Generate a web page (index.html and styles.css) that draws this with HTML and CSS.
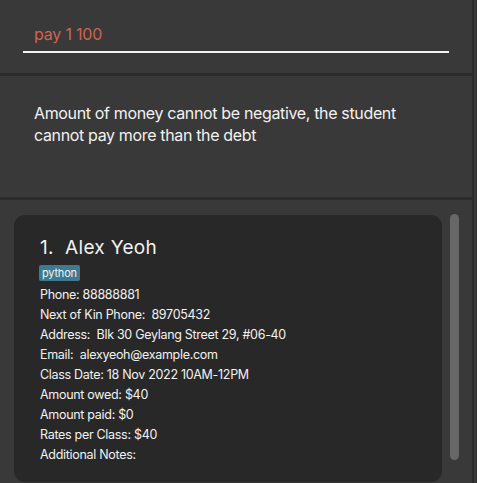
FILE: index.html
```html
<!DOCTYPE html>
<html>
<head>
<meta charset="utf-8">
<link rel="stylesheet" href="styles.css">
</head>
<body>
<div class="app">
  <div class="main">
    <div class="command">
      <div class="input">pay 1 100</div>
    </div>
    <div class="result">
      <p>Amount of money cannot be negative, the student cannot pay more than the debt</p>
    </div>
    <div class="list">
      <div class="card">
        <div class="name">1.&nbsp; Alex Yeoh</div>
        <div class="tags"><span class="tag">python</span></div>
        <div class="field">Phone: 88888881</div>
        <div class="field">Next of Kin Phone:&nbsp; 89705432</div>
        <div class="field">Address:&nbsp; Blk 30 Geylang Street 29, #06-40</div>
        <div class="field">Email:&nbsp; alexyeoh@example.com</div>
        <div class="field">Class Date: 18 Nov 2022 10AM-12PM</div>
        <div class="field">Amount owed: $40</div>
        <div class="field">Amount paid: $0</div>
        <div class="field">Rates per Class: $40</div>
        <div class="field">Additional Notes:</div>
      </div>
      <div class="scrollbar"></div>
    </div>
  </div>
</div>
</body>
</html>
```
FILE: styles.css
```css
html, body {
  margin: 0;
  padding: 0;
}
body {
  width: 477px;
  height: 483px;
  overflow: hidden;
  background: #393939;
  font-family: Inter, "Noto Sans", sans-serif;
  color: #f2f2f2;
}
.app {
  display: flex;
  height: 483px;
}
.main {
  width: 472px;
  border-right: 2px solid #2c2c2c;
  display: flex;
  flex-direction: column;
}
.command {
  box-sizing: border-box;
  padding: 24px 23px 0 23px;
  border-bottom: 3px solid #2c2c2c;
  height: 76px;
}
.input {
  font-size: 16px;
  color: #cf6452;
  padding: 0 0 7px 11px;
  border-bottom: 2px solid #f2f2f2;
  letter-spacing: -0.2px;
  line-height: 20px;
}
.result {
  height: 124px;
  box-sizing: border-box;
  border-bottom: 3px solid #2c2c2c;
  padding: 26px 60px 0 34px;
}
.result p {
  margin: 0;
  font-size: 16px;
  line-height: 22px;
  letter-spacing: -0.35px;
  color: #f2f2f2;
}
.list {
  flex: 1;
  display: flex;
  padding: 15px 0 0 14px;
  gap: 8px;
}
.card {
  width: 428px;
  height: 267px;
  box-sizing: border-box;
  background: #282828;
  border-radius: 11px;
  padding: 19px 10px 0 26px;
}
.name {
  font-size: 19px;
  line-height: 27px;
  color: #f2f2f2;
  letter-spacing: 0.3px;
}
.tags {
  margin-top: 4px;
  height: 16px;
  display: flex;
}
.tag {
  background: #3e7b91;
  color: #f2f2f2;
  font-size: 11px;
  line-height: 16px;
  padding: 0 3px;
  border-radius: 2px;
  margin-left: -1px;
  letter-spacing: -0.2px;
}
.field {
  font-size: 12.5px;
  line-height: 20px;
  letter-spacing: -0.3px;
  color: #f2f2f2;
}
.tags + .field {
  margin-top: 4px;
}
.scrollbar {
  width: 9px;
  height: 246px;
  margin-top: -1px;
  background: #676767;
  border-radius: 5px;
}
```
